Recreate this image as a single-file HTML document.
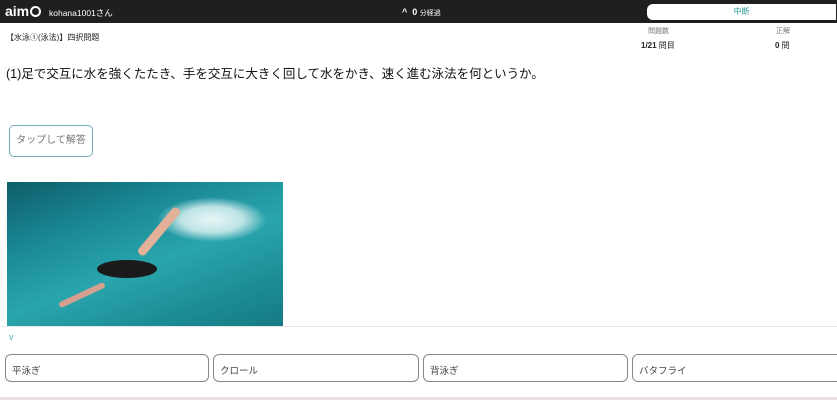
<!DOCTYPE html>
<html><head><meta charset="utf-8"><style>
*{margin:0;padding:0;box-sizing:border-box}
body{width:837px;height:400px;overflow:hidden;background:#fff;font-family:"Liberation Sans","Noto Sans CJK JP",sans-serif;color:#222;position:relative}
.hd{position:absolute;left:0;top:0;width:837px;height:23px;background:#1f1f1f;color:#fff}
.abs{position:absolute;white-space:nowrap}
.btn{position:absolute;top:354px;height:28px;border:1px solid #888;border-radius:6px;font-size:9.5px;padding:8px 6px;color:#444}
</style></head><body>
<div class="hd">
<div class="abs" style="left:5px;top:3px;font-size:14px;line-height:16px;font-weight:bold">aim<span style="display:inline-block;width:11px;height:11px;border:2.5px solid #fff;border-radius:50%;vertical-align:-1px;margin-left:1px"></span></div>
<div class="abs" style="left:49px;top:7px;font-size:8.5px">kohana1001さん</div>
<div class="abs" style="left:402px;top:7px;font-size:9px;font-weight:bold">^&nbsp;&nbsp;0 <span style="font-weight:normal;font-size:7px">分経過</span></div>
<div class="abs" style="left:647px;top:4px;width:189px;height:16px;background:#fff;border-radius:6px 0 0 6px;color:#2a9a9a;font-size:8px;text-align:center;line-height:16px">中断</div>
</div>
<div class="abs" style="left:6px;top:32px;font-size:8px">【水泳①(泳法)】四択問題</div>
<div class="abs" style="left:648px;top:26px;font-size:7px;color:#777">問題数</div>
<div class="abs" style="left:641px;top:40px;font-size:8px;font-weight:bold">1/21 <span style="font-weight:normal">問目</span></div>
<div class="abs" style="left:776px;top:26px;font-size:7px;color:#777">正解</div>
<div class="abs" style="left:775px;top:40px;font-size:8px;font-weight:bold">0 <span style="font-weight:normal">問</span></div>
<div class="abs" style="left:6px;top:63px;font-size:12.5px;color:#111">(1)足で交互に水を強くたたき、手を交互に大きく回して水をかき、速く進む泳法を何というか。</div>
<div class="abs" style="left:9px;top:125px;width:84px;height:32px;border:1px solid #7ab;border-radius:5px;font-size:10px;color:#777;text-align:center;line-height:30px">タップして解答</div>
<div class="abs" style="left:7px;top:182px;width:276px;height:144px;background:linear-gradient(160deg,#0f5d6a 0%,#1a8a96 30%,#2aa5ad 55%,#1c8c94 80%,#167a84 100%);overflow:hidden">
<div style="position:absolute;left:150px;top:15px;width:110px;height:45px;background:radial-gradient(ellipse,#e8f6f6 0%,#bde3e5 40%,transparent 70%)"></div>
<div style="position:absolute;left:90px;top:78px;width:60px;height:18px;background:#1a1a1a;border-radius:50%"></div>
<div style="position:absolute;left:122px;top:45px;width:60px;height:9px;background:#e3b09a;border-radius:5px;transform:rotate(-50deg)"></div>
<div style="position:absolute;left:50px;top:110px;width:50px;height:6px;background:#d5a090;border-radius:4px;transform:rotate(-25deg)"></div>
</div>
<div class="abs" style="left:0;top:326px;width:837px;height:1px;background:#e4e4e4"></div>
<div class="abs" style="left:9px;top:332px;font-size:9px;color:#5aa">v</div>
<div class="btn" style="left:5px;width:204px">平泳ぎ</div>
<div class="btn" style="left:213px;width:206px">クロール</div>
<div class="btn" style="left:423px;width:205px">背泳ぎ</div>
<div class="btn" style="left:632px;width:210px">バタフライ</div>
<div class="abs" style="left:0;top:397px;width:837px;height:3px;background:#e8dfe6"></div>
</body></html>
